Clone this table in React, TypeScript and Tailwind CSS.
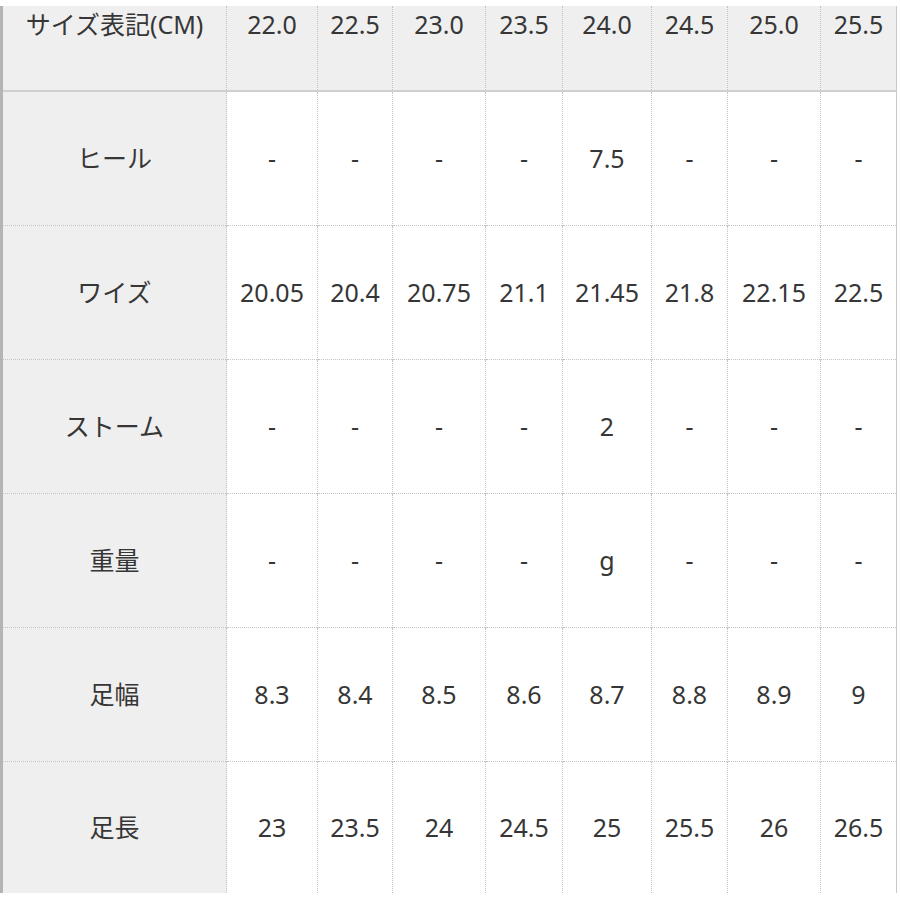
const SIZES = ['22.0', '22.5', '23.0', '23.5', '24.0', '24.5', '25.0', '25.5'];

const COL_WIDTHS = [225, 91, 75, 93, 77, 89, 76, 93, 76];

const ROWS: { label: string; values: string[] }[] = [
  { label: 'ヒール', values: ['-', '-', '-', '-', '7.5', '-', '-', '-'] },
  {
    label: 'ワイズ',
    values: ['20.05', '20.4', '20.75', '21.1', '21.45', '21.8', '22.15', '22.5'],
  },
  { label: 'ストーム', values: ['-', '-', '-', '-', '2', '-', '-', '-'] },
  { label: '重量', values: ['-', '-', '-', '-', 'g', '-', '-', '-'] },
  {
    label: '足幅',
    values: ['8.3', '8.4', '8.5', '8.6', '8.7', '8.8', '8.9', '9'],
  },
  {
    label: '足長',
    values: ['23', '23.5', '24', '24.5', '25', '25.5', '26', '26.5'],
  },
];

export default function App() {
  return (
    <div
      className="h-[900px] w-[900px] overflow-hidden bg-white pt-[6px] text-[#363636]"
      style={{ fontFamily: '"Noto Sans", "Noto Sans CJK JP", sans-serif' }}
    >
      <table className="table-fixed border-collapse border-l-[3px] border-r border-l-[#b4b4b4] border-r-[#c9c9c9] text-[25px] leading-[36px]">
        <colgroup>
          {COL_WIDTHS.map((w, i) => (
            <col key={i} style={{ width: w }} />
          ))}
        </colgroup>
        <thead>
          <tr className="h-[85px] border-b-2 border-b-[#cfcfcf] bg-[#efefef]">
            <th className="p-0 text-center align-top font-normal">
              サイズ表記(CM)
            </th>
            {SIZES.map((s) => (
              <th
                key={s}
                className="border-l border-dotted border-l-[#c4c4c4] p-0 text-center align-top font-normal"
              >
                {s}
              </th>
            ))}
          </tr>
        </thead>
        <tbody>
          {ROWS.map((row, ri) => (
            <tr
              key={row.label}
              className={
                ri === ROWS.length - 1
                  ? 'h-[132px]'
                  : 'h-[134px] border-b border-dotted border-b-[#c4c4c4]'
              }
            >
              <td className="bg-[#efefef] p-0 text-center align-middle">
                {row.label}
              </td>
              {row.values.map((v, i) => (
                <td
                  key={i}
                  className="border-l border-dotted border-l-[#c4c4c4] p-0 text-center align-middle"
                >
                  {v}
                </td>
              ))}
            </tr>
          ))}
        </tbody>
      </table>
    </div>
  );
}
